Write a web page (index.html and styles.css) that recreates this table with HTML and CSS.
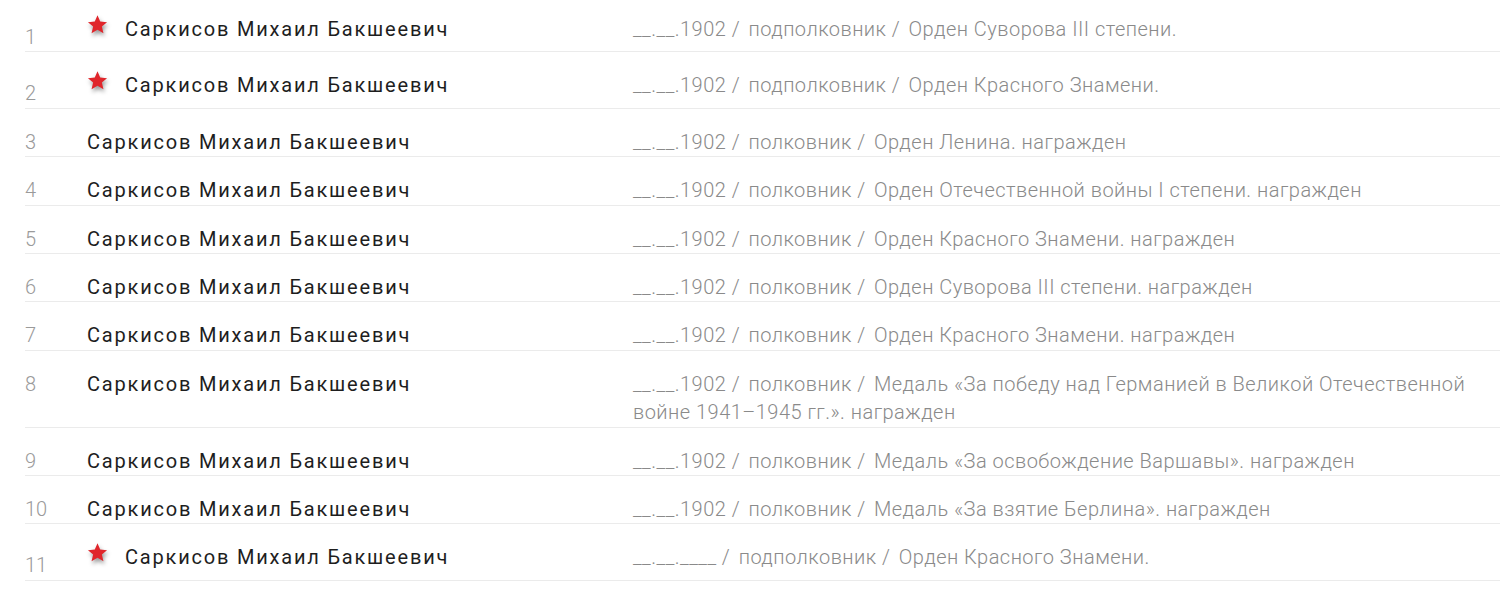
FILE: index.html
```html
<!DOCTYPE html>
<html lang="ru">
<head>
<meta charset="utf-8">
<title>Награды</title>
<link rel="stylesheet" href="styles.css">
</head>
<body>
<svg width="0" height="0" class="defs" aria-hidden="true">
  <defs>
    <symbol id="star" viewBox="0 0 24 24">
      <path d="M12 1.5l3.1 7.2 7.8.6-5.9 5.1 1.8 7.6L12 17.9 5.2 22l1.8-7.6L1.1 9.3l7.8-.6z"/>
    </symbol>
  </defs>
</svg>
<ul class="list">
  <li class="row row--star">
    <span class="num">1</span>
    <span class="name"><svg class="star"><use href="#star"/></svg>Саркисов Михаил Бакшеевич</span>
    <span class="info"><span class="part">__.__.1902 /</span> <span class="part">подполковник /</span> <span>Орден Суворова III степени.</span></span>
  </li>
  <li class="row row--star">
    <span class="num">2</span>
    <span class="name"><svg class="star"><use href="#star"/></svg>Саркисов Михаил Бакшеевич</span>
    <span class="info"><span class="part">__.__.1902 /</span> <span class="part">подполковник /</span> <span>Орден Красного Знамени.</span></span>
  </li>
  <li class="row">
    <span class="num">3</span>
    <span class="name">Саркисов Михаил Бакшеевич</span>
    <span class="info"><span class="part">__.__.1902 /</span> <span class="part">полковник /</span> <span>Орден Ленина. награжден</span></span>
  </li>
  <li class="row">
    <span class="num">4</span>
    <span class="name">Саркисов Михаил Бакшеевич</span>
    <span class="info"><span class="part">__.__.1902 /</span> <span class="part">полковник /</span> <span>Орден Отечественной войны I степени. награжден</span></span>
  </li>
  <li class="row">
    <span class="num">5</span>
    <span class="name">Саркисов Михаил Бакшеевич</span>
    <span class="info"><span class="part">__.__.1902 /</span> <span class="part">полковник /</span> <span>Орден Красного Знамени. награжден</span></span>
  </li>
  <li class="row">
    <span class="num">6</span>
    <span class="name">Саркисов Михаил Бакшеевич</span>
    <span class="info"><span class="part">__.__.1902 /</span> <span class="part">полковник /</span> <span>Орден Суворова III степени. награжден</span></span>
  </li>
  <li class="row">
    <span class="num">7</span>
    <span class="name">Саркисов Михаил Бакшеевич</span>
    <span class="info"><span class="part">__.__.1902 /</span> <span class="part">полковник /</span> <span>Орден Красного Знамени. награжден</span></span>
  </li>
  <li class="row">
    <span class="num num--top">8</span>
    <span class="name">Саркисов Михаил Бакшеевич</span>
    <span class="info"><span class="part">__.__.1902 /</span> <span class="part">полковник /</span> <span>Медаль «За победу над Германией в Великой Отечественной войне 1941–1945 гг.». награжден</span></span>
  </li>
  <li class="row">
    <span class="num">9</span>
    <span class="name">Саркисов Михаил Бакшеевич</span>
    <span class="info"><span class="part">__.__.1902 /</span> <span class="part">полковник /</span> <span>Медаль «За освобождение Варшавы». награжден</span></span>
  </li>
  <li class="row">
    <span class="num">10</span>
    <span class="name">Саркисов Михаил Бакшеевич</span>
    <span class="info"><span class="part">__.__.1902 /</span> <span class="part">полковник /</span> <span>Медаль «За взятие Берлина». награжден</span></span>
  </li>
  <li class="row row--star">
    <span class="num">11</span>
    <span class="name"><svg class="star"><use href="#star"/></svg>Саркисов Михаил Бакшеевич</span>
    <span class="info"><span class="part">__.__.____ /</span> <span class="part">подполковник /</span> <span>Орден Красного Знамени.</span></span>
  </li>
</ul>
</body>
</html>
```
FILE: styles.css
```css
html, body {
  margin: 0;
  padding: 0;
  background: #ffffff;
}

body {
  font-family: Roboto, "Liberation Sans", sans-serif;
  overflow: hidden;
}

.defs {
  position: absolute;
  width: 0;
  height: 0;
}

.list {
  list-style: none;
  margin: -4px 0 0 25px;
  padding: 0;
}

.row {
  display: flex;
  align-items: flex-start;
  padding-top: 19px;
  padding-bottom: 0;
  border-bottom: 1px solid #ebebeb;
  font-size: 20px;
  line-height: 28.4px;
}

.num {
  flex: 0 0 62px;
  align-self: flex-end;
  color: #9a9a9a;
  font-weight: 300;
}

.num--top {
  align-self: flex-start;
}

.name {
  flex: 0 0 546px;
  display: flex;
  align-items: center;
  color: #1e1e1e;
  font-weight: 400;
  letter-spacing: 1.8px;
}

.row--star .name {
  padding-bottom: 8px;
}

.star {
  width: 21px;
  height: 21px;
  margin: -10px 17px 0 0;
  fill: #e0262b;
  filter: drop-shadow(1px 3px 2px rgba(0, 0, 0, 0.4));
  flex: 0 0 auto;
}

.info {
  flex: 1 1 auto;
  color: #8a8a8a;
  font-weight: 300;
  letter-spacing: 0.48px;
}

.part {
  margin-right: 3px;
}
```
